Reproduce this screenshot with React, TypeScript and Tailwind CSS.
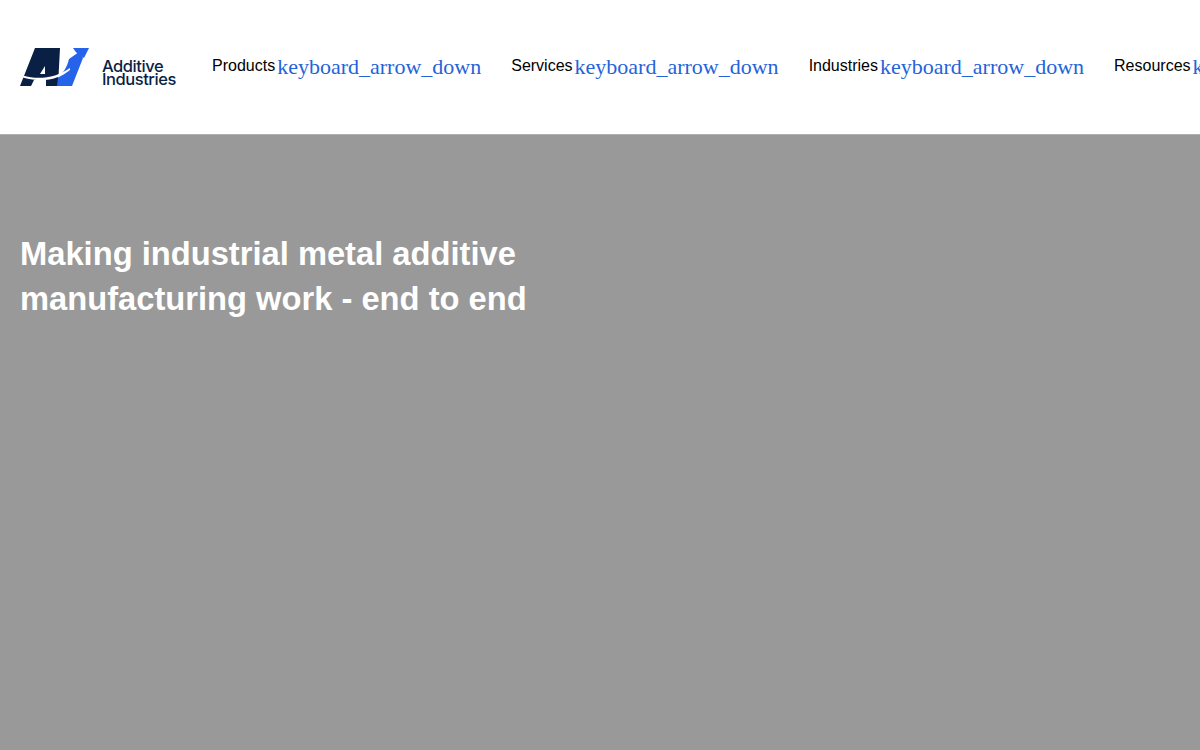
const navItems = ["Products", "Services", "Industries", "Resources"];

function Logo() {
  return (
    <div className="flex items-end shrink-0 w-[155px] h-[40px]">
      <svg width="69" height="38" viewBox="0 0 69 38" className="shrink-0 mb-[1px]">
        <path d="M15 0H40L38 38H26L26 32L14 32L11 38H0Z" fill="#0a1f44" />
        <path d="M25 18L25 26L20 26Z" fill="#ffffff" />
        <path d="M49 11L59 4L63 10L52 38H37L38 30C42 26 47 20 49 11Z" fill="#2563eb" />
        <path d="M53 0H69L64 10C60 8 56 5 53 0Z" fill="#2563eb" />
        <path d="M3 27.500C18 32 36 30 50 20L50 22C38 32 22 35 3 29.500Z" fill="#ffffff" />
      </svg>
      <div className="ml-[13px] text-[#0a1f44] text-[16.500px] leading-[13px] font-medium tracking-[-0.45px] font-['Inter',sans-serif] whitespace-nowrap mb-[1px]">
        <div>Additive</div>
        <div>Industries</div>
      </div>
    </div>
  );
}

export default function App() {
  return (
    <div className="h-[750px] w-[1200px] overflow-hidden bg-[#999999] font-['Liberation_Sans',sans-serif]">
      {/* Header */}
      <header className="h-[135px] bg-white flex items-center pl-[20px] border-b border-[#b0b0b0] whitespace-nowrap">
        <Logo />
        <nav className="flex items-center gap-[30px] ml-[37px]">
          {navItems.map((item) => (
            <div key={item} className="flex items-center gap-[2px]">
              <span className="text-black text-[16px] leading-[24px] -mt-[3px]">{item}</span>
              <span className="text-[#2563d9] text-[22px] leading-[32px] font-['Liberation_Serif',serif]">
                keyboard_arrow_down
              </span>
            </div>
          ))}
        </nav>
      </header>

      {/* Hero */}
      <section className="pl-[20px] pt-[96px]">
        <h1 className="text-white text-[32.700px] leading-[45px] font-bold w-[560px]">
          Making industrial metal additive manufacturing work - end to end
        </h1>
      </section>
    </div>
  );
}
